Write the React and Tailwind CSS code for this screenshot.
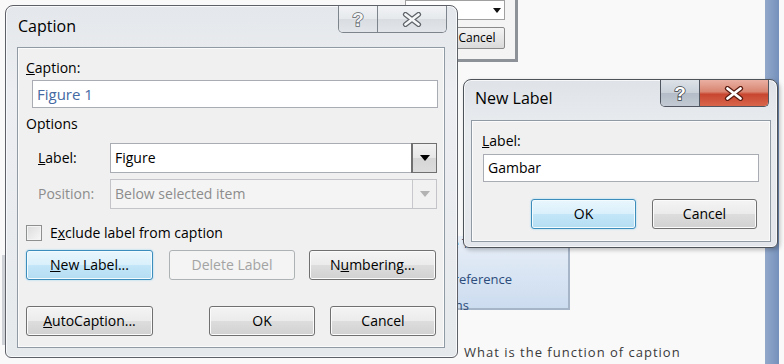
import React from "react";

// title bar glyphs (help / close)
const HelpGlyph = ({ active }) => (
    <svg width="16" height="20" viewBox="0 0 16 20">
        <text
            x="8"
            y="17"
            textAnchor="middle"
            fontSize="19"
            fontWeight="700"
            fontFamily="Liberation Sans, sans-serif"
            fill={active ? "#ffffff" : "#f4f5f6"}
            stroke={active ? "#3b3f45" : "#5f646a"}
            strokeWidth="1.5"
            paintOrder="stroke"
        >
            ?
        </text>
    </svg>
);

const CloseGlyph = ({ active }) => (
    <svg width="20" height="15" viewBox="0 0 20 15">
        <path d="M3.5 2.5 L16.5 12.5 M16.5 2.5 L3.5 12.5" stroke={active ? "#5b1d12" : "#5f646a"} strokeWidth="5.2" strokeLinecap="round" />
        <path d="M3.5 2.5 L16.5 12.5 M16.5 2.5 L3.5 12.5" stroke={active ? "#ffffff" : "#f4f5f6"} strokeWidth="2.8" strokeLinecap="round" />
    </svg>
);

const TitleButtons = ({ active }) => (
    <div className={`flex h-[27px] rounded-b-[5px] border border-t-0 overflow-hidden ${active ? "border-[#4f5660]" : "border-[#7d848c]"}`}>
        <div className={`w-[39px] flex items-center justify-center border-r ${active ? "border-[#4f5660] bg-[linear-gradient(180deg,#dde2e8_0%,#c9d0d8_50%,#b3bcc7_51%,#c3cad3_100%)]" : "border-[#7d848c] bg-[linear-gradient(180deg,#f1f3f5_0%,#e6e9ec_50%,#d9dde2_51%,#e2e5e9_100%)]"}`}>
            <HelpGlyph active={active} />
        </div>
        <div className={`w-[68px] flex items-center justify-center ${active ? "bg-[linear-gradient(180deg,#eab0a2_0%,#d98571_45%,#c8462f_55%,#d8664b_100%)]" : "bg-[linear-gradient(180deg,#f1f3f5_0%,#e6e9ec_50%,#d9dde2_51%,#e2e5e9_100%)]"}`}>
            <CloseGlyph active={active} />
        </div>
    </div>
);

const Arrow = ({ color }) => (
    <svg width="10" height="6" viewBox="0 0 10 6">
        <polygon points="0,0 10,0 5,6" fill={color} />
    </svg>
);

const Button = ({ w, kind, children }) => {
    const styles = {
        normal: "border-[#707070] bg-[linear-gradient(180deg,#f4f4f4_0%,#ebebeb_50%,#dddddd_51%,#d1d1d1_100%)] shadow-[inset_0_0_0_1px_#fbfbfb] text-black",
        focus: "border-[#3c8dbc] bg-[linear-gradient(180deg,#e9f6fd_0%,#d9f0fb_50%,#c3e6f8_51%,#b4ddf2_100%)] shadow-[inset_0_0_0_1px_#f4fbff,0_0_2px_#8fd0f0] text-black",
        disabled: "border-[#adb2b5] bg-[#f4f4f4] text-[#a3a3a3]",
    };
    return (
        <div className={`h-[30px] flex items-center justify-center rounded-[3px] border ${styles[kind]}`} style={{ width: w }}>
            {children}
        </div>
    );
};

const Select = ({ value, disabled }) => (
    <div className={`w-[327px] h-[30px] flex items-center border ${disabled ? "border-[#c2c4c7] bg-[#f4f4f4] text-[#8c8c8c]" : "border-[#a9acb2] bg-white text-black"}`}>
        <div className="flex-1 pl-[4px]">{value}</div>
        <div className={`w-[24px] h-full flex items-center justify-center border-l ${disabled ? "border-[#c6c8cb] bg-[#f1f1f1]" : "border-[#707070] bg-[linear-gradient(180deg,#f2f2f2_0%,#e6e6e6_50%,#d6d6d6_51%,#dcdcdc_100%)] outline outline-[#707070]"}`}>
            <Arrow color={disabled ? "#b3b3b3" : "#000000"} />
        </div>
    </div>
);

const App = () => {
    return (
        <div className="relative w-[784px] h-[364px] overflow-hidden bg-[#f9f9f9] font-['Open_Sans',sans-serif] text-[14px] leading-[20px] text-black">
            {/* Word window behind the dialogs */}
            <div className="absolute left-[765px] top-0 w-[14px] h-[364px] bg-[linear-gradient(90deg,#93a9cb,#7490bb)]" />
            <div className="absolute left-[2px] top-[255px] w-[3px] h-[90px] bg-[#cfd3d8]" />

            {/* top panel: combo + Cancel */}
            <div className="absolute left-[400px] top-[-4px] w-[118px] h-[66px] bg-[#f4f4f4] border-r-[3px] border-b-[3px] border-[#8d9299] flex flex-col items-end pr-[10px] pt-[4px] gap-[7px]">
                <div className="w-[100px] h-[20px] border border-[#a0a0a0] bg-white flex items-center justify-end pr-[3px]">
                    <svg width="8" height="5" viewBox="0 0 8 5"><polygon points="0,0 8,0 4,5" fill="#111" /></svg>
                </div>
                <div className="w-[56px] h-[22px] rounded-[2px] border border-[#8a8a8a] bg-[linear-gradient(180deg,#f4f4f4,#dadada)] flex items-center justify-center text-[12px] leading-[16px]">
                    Cancel
                </div>
            </div>

            {/* ribbon: Captions group */}
            <div className="absolute left-[380px] top-[236px] w-[190px] h-[74px] bg-[linear-gradient(180deg,#e8eff8,#ccdcef)] border-r-2 border-b-2 border-[#a7b5c8] text-[#2c4c7b] text-[13px] leading-[18px] flex flex-col">
                <div className="w-[115px] text-right -mt-[2px]">Update Table</div>
                <div className="w-[132px] text-right mt-[18px]">Cross-reference</div>
                <div className="w-[89px] text-right mt-[8px]">Captions</div>
            </div>

            <div className="absolute left-[464px] top-[343px] text-[13px] leading-[18px] text-[#3a3a3a] tracking-[1px]">What is the function of caption</div>

            {/* Caption dialog */}
            <div className="absolute left-[5px] top-[5px] w-[453px] h-[353px] rounded-t-[8px] rounded-b-[6px] border border-[#5d6167] bg-[linear-gradient(180deg,#e4e7eb_0%,#eceef1_25%,#e6e9ec_100%)] shadow-[inset_0_0_0_1px_#f8f9fa] flex flex-col">
                <div className="flex justify-between h-[41px]">
                    <div className="pl-[12px] pt-[10px] text-[16px] leading-[20px]">Caption</div>
                    <div className="mr-[10px]">
                        <TitleButtons />
                    </div>
                </div>
                <div className="ml-[11px] w-[428px] h-[301px] border border-[#8f9aa5] bg-[#f0f0f0] shadow-[inset_0_0_0_1px_#fbfbfb] flex flex-col">
                    <div className="mt-[10px] pl-[8px]">
                        <u>C</u>aption:
                    </div>
                    <div className="mt-[2px] ml-[14px] w-[406px] h-[28px] border border-[#a9acb2] bg-white flex items-center pl-[4px] text-[#4569a3] text-[15px]">
                        Figure 1
                    </div>
                    <div className="mt-[6px] pl-[8px]">Options</div>
                    <div className="mt-[9px] flex items-center">
                        <div className="w-[92px] pl-[20px]">
                            <u>L</u>abel:
                        </div>
                        <Select value="Figure" />
                    </div>
                    <div className="mt-[6px] flex items-center">
                        <div className="w-[92px] pl-[20px] text-[#8c8c8c]">Position:</div>
                        <Select value="Below selected item" disabled />
                    </div>
                    <div className="mt-[14px] ml-[8px] flex items-center gap-[8px]">
                        <div className="w-[16px] h-[16px] border border-[#8e8f8f] bg-[linear-gradient(135deg,#dcdcdc,#f7f7f7)] shadow-[inset_0_0_0_1px_#f4f4f4]" />
                        <div>
                            E<u>x</u>clude label from caption
                        </div>
                    </div>
                    <div className="mt-[7px] ml-[8px] flex">
                        <Button w={127} kind="focus">
                            <span><u>N</u>ew Label...</span>
                        </Button>
                        <div className="ml-[16px]">
                            <Button w={126} kind="disabled">Delete Label</Button>
                        </div>
                        <div className="ml-[14px]">
                            <Button w={127} kind="normal">
                                <span>N<u>u</u>mbering...</span>
                            </Button>
                        </div>
                    </div>
                    <div className="mt-[26px] ml-[8px] flex">
                        <Button w={127} kind="normal">
                            <span><u>A</u>utoCaption...</span>
                        </Button>
                        <div className="ml-[56px]">
                            <Button w={106} kind="normal">OK</Button>
                        </div>
                        <div className="ml-[15px]">
                            <Button w={106} kind="normal">Cancel</Button>
                        </div>
                    </div>
                </div>
            </div>

            {/* New Label dialog */}
            <div className="absolute left-[463px] top-[79px] w-[315px] h-[169px] rounded-t-[8px] rounded-b-[6px] border border-[#4e535a] bg-[linear-gradient(180deg,#dfe3e8_0%,#e9ecef_30%,#e3e6ea_100%)] shadow-[inset_0_0_0_1px_#f6f7f9,2px_2px_4px_rgba(0,0,0,0.25)] flex flex-col">
                <div className="flex justify-between h-[40px]">
                    <div className="pl-[11px] pt-[8px] text-[16px] leading-[20px]">New Label</div>
                    <div className="mr-[8px]">
                        <TitleButtons active />
                    </div>
                </div>
                <div className="ml-[7px] w-[300px] h-[122px] border border-[#8f9aa5] bg-[#f0f0f0] shadow-[inset_0_0_0_1px_#fbfbfb] flex flex-col">
                    <div className="mt-[10px] pl-[10px]">
                        <u>L</u>abel:
                    </div>
                    <div className="mt-[3px] ml-[11px] w-[276px] h-[28px] border border-[#a9acb2] bg-white flex items-center pl-[4px]">
                        Gambar
                    </div>
                    <div className="mt-[17px] ml-[59px] flex gap-[16px]">
                        <Button w={105} kind="focus">OK</Button>
                        <Button w={105} kind="normal">Cancel</Button>
                    </div>
                </div>
            </div>
        </div>
    );
};

export default App;
